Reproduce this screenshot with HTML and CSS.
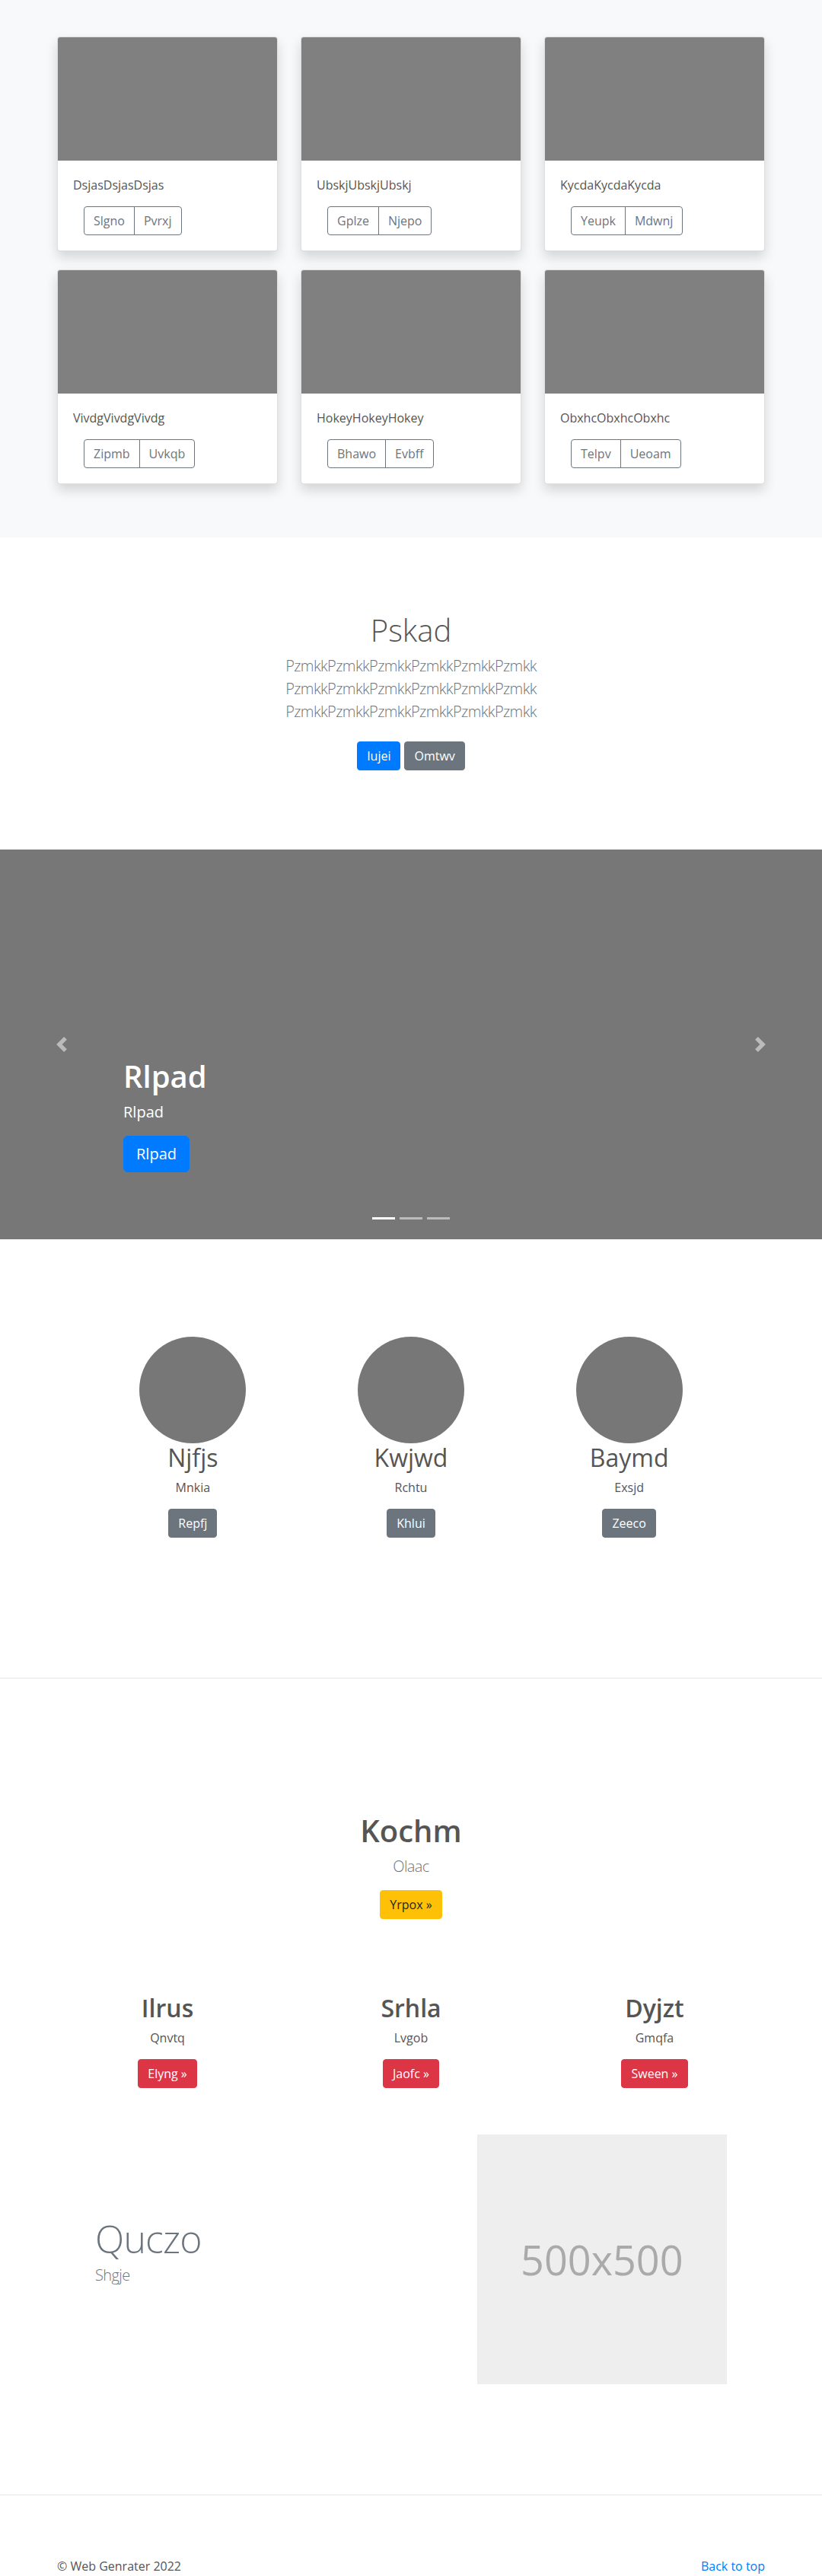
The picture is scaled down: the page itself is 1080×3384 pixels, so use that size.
FILE: index.html
```html
<!DOCTYPE html>
<html lang="en">
<head>
<meta charset="utf-8">
<title>Web Genrater</title>
<link rel="stylesheet" href="styles.css">
</head>
<body>
<main>
  <section class="album">
    <div class="container">
      <div class="card-grid">
        <div class="card">
          <div class="card-img"></div>
          <div class="card-body">
            <p class="card-text">DsjasDsjasDsjas</p>
            <div class="btn-group"><a class="btn btn-outline" href="#">Slgno</a><a class="btn btn-outline" href="#">Pvrxj</a></div>
          </div>
        </div>
        <div class="card">
          <div class="card-img"></div>
          <div class="card-body">
            <p class="card-text">UbskjUbskjUbskj</p>
            <div class="btn-group"><a class="btn btn-outline" href="#">Gplze</a><a class="btn btn-outline" href="#">Njepo</a></div>
          </div>
        </div>
        <div class="card">
          <div class="card-img"></div>
          <div class="card-body">
            <p class="card-text">KycdaKycdaKycda</p>
            <div class="btn-group"><a class="btn btn-outline" href="#">Yeupk</a><a class="btn btn-outline" href="#">Mdwnj</a></div>
          </div>
        </div>
        <div class="card">
          <div class="card-img"></div>
          <div class="card-body">
            <p class="card-text">VivdgVivdgVivdg</p>
            <div class="btn-group"><a class="btn btn-outline" href="#">Zipmb</a><a class="btn btn-outline" href="#">Uvkqb</a></div>
          </div>
        </div>
        <div class="card">
          <div class="card-img"></div>
          <div class="card-body">
            <p class="card-text">HokeyHokeyHokey</p>
            <div class="btn-group"><a class="btn btn-outline" href="#">Bhawo</a><a class="btn btn-outline" href="#">Evbff</a></div>
          </div>
        </div>
        <div class="card">
          <div class="card-img"></div>
          <div class="card-body">
            <p class="card-text">ObxhcObxhcObxhc</p>
            <div class="btn-group"><a class="btn btn-outline" href="#">Telpv</a><a class="btn btn-outline" href="#">Ueoam</a></div>
          </div>
        </div>
      </div>
    </div>
  </section>

  <section class="hero">
    <div class="container">
      <h1>Pskad</h1>
      <p class="lead">PzmkkPzmkkPzmkkPzmkkPzmkkPzmkk PzmkkPzmkkPzmkkPzmkkPzmkkPzmkk PzmkkPzmkkPzmkkPzmkkPzmkkPzmkk</p>
      <div class="hero-actions">
        <a class="btn btn-primary" href="#">Iujei</a>
        <a class="btn btn-secondary" href="#">Omtwv</a>
      </div>
    </div>
  </section>

  <section class="carousel">
    <ol class="carousel-indicators">
      <li class="active"></li>
      <li></li>
      <li></li>
    </ol>
    <div class="carousel-caption">
      <h1>Rlpad</h1>
      <p>Rlpad</p>
      <div class="caption-actions"><a class="btn btn-lg btn-primary" href="#">Rlpad</a></div>
    </div>
    <a class="carousel-control prev" href="#" aria-label="Previous">
      <svg viewBox="0 0 8 8" width="20" height="20"><path fill="#fff" d="M5.25 0l-4 4 4 4 1.5-1.5L4.25 4l2.5-2.5L5.25 0z"/></svg>
    </a>
    <a class="carousel-control next" href="#" aria-label="Next">
      <svg viewBox="0 0 8 8" width="20" height="20"><path fill="#fff" d="M2.75 0l-1.5 1.5L3.75 4l-2.5 2.5L2.75 8l4-4-4-4z"/></svg>
    </a>
  </section>

  <section class="marketing">
    <div class="col">
      <div class="circle"></div>
      <h2>Njfjs</h2>
      <p>Mnkia</p>
      <div class="actions"><a class="btn btn-secondary" href="#">Repfj</a></div>
    </div>
    <div class="col">
      <div class="circle"></div>
      <h2>Kwjwd</h2>
      <p>Rchtu</p>
      <div class="actions"><a class="btn btn-secondary" href="#">Khlui</a></div>
    </div>
    <div class="col">
      <div class="circle"></div>
      <h2>Baymd</h2>
      <p>Exsjd</p>
      <div class="actions"><a class="btn btn-secondary" href="#">Zeeco</a></div>
    </div>
  </section>

  <hr class="divider divider-top">

  <section class="promo">
    <div class="container">
      <h1>Kochm</h1>
      <p class="lead">Olaac</p>
      <div class="actions"><a class="btn btn-warning" href="#">Yrpox &raquo;</a></div>
    </div>
    <div class="container features">
      <div class="col">
        <h2>Ilrus</h2>
        <p>Qnvtq</p>
        <div class="actions"><a class="btn btn-danger" href="#">Elyng &raquo;</a></div>
      </div>
      <div class="col">
        <h2>Srhla</h2>
        <p>Lvgob</p>
        <div class="actions"><a class="btn btn-danger" href="#">Jaofc &raquo;</a></div>
      </div>
      <div class="col">
        <h2>Dyjzt</h2>
        <p>Gmqfa</p>
        <div class="actions"><a class="btn btn-danger" href="#">Sween &raquo;</a></div>
      </div>
    </div>
  </section>

  <section class="featurette">
    <div class="featurette-text">
      <h2>Quczo</h2>
      <p class="lead">Shgje</p>
    </div>
    <div class="featurette-media">
      <div class="placeholder">500x500</div>
    </div>
  </section>

  <hr class="divider divider-bottom">
</main>

<footer class="footer">
  <p>&copy; Web Genrater 2022</p>
  <p><a href="#">Back to top</a></p>
</footer>
</body>
</html>
```

FILE: styles.css
```css
* { box-sizing: border-box; }

body {
  margin: 0;
  font-family: "Open Sans", "Noto Sans", sans-serif;
  font-size: 16px;
  line-height: 1.5;
  color: #555;
  background: #fff;
}

h1, h2, p { margin: 0; }

.container {
  width: 960px;
  margin: 0 auto;
  padding: 0 15px;
}

/* ---------- buttons ---------- */
.btn {
  display: inline-block;
  font-family: inherit;
  font-size: 16px;
  font-weight: 400;
  line-height: 24px;
  padding: 6px 12px;
  border: 1px solid transparent;
  border-radius: 4px;
  text-decoration: none;
  vertical-align: top;
  white-space: nowrap;
}
.btn-outline { color: #6c757d; border-color: #6c757d; background: transparent; }
.btn-primary { background: #007bff; border-color: #007bff; color: #fff; }
.btn-secondary { background: #6c757d; border-color: #6c757d; color: #fff; }
.btn-warning { background: #ffc107; border-color: #ffc107; color: #212529; }
.btn-danger { background: #dc3545; border-color: #dc3545; color: #fff; }
.btn-lg { font-size: 20px; line-height: 30px; padding: 8px 16px; border-radius: 6px; }

.btn-group { display: inline-flex; margin-left: 14px; }
.btn-group .btn:first-child { border-top-right-radius: 0; border-bottom-right-radius: 0; }
.btn-group .btn + .btn { margin-left: -1px; border-top-left-radius: 0; border-bottom-left-radius: 0; }

.actions { display: flex; justify-content: center; }

/* ---------- album ---------- */
.album {
  background: #f8f9fa;
  padding: 48px 0 70px;
}
.card-grid {
  display: grid;
  grid-template-columns: repeat(3, 1fr);
  gap: 24px 30px;
}
.card {
  background: #fff;
  border: 1px solid rgba(0, 0, 0, .125);
  border-radius: 4px;
  box-shadow: 0 8px 16px rgba(0, 0, 0, .15);
  overflow: hidden;
}
.card-img { aspect-ratio: 16 / 9; background: #808080; }
.card-body { padding: 20px; }
.card-text { margin-bottom: 16px; }

/* ---------- hero ---------- */
.hero {
  text-align: center;
  padding: 98px 0 96px;
}
.hero h1 {
  font-size: 40px;
  font-weight: 300;
  line-height: 48px;
  margin-bottom: 8px;
  color: #555;
}
.lead {
  font-size: 20px;
  font-weight: 300;
  line-height: 30px;
  letter-spacing: -0.03em;
}
.hero .lead {
  color: #6c757d;
  max-width: 500px;
  margin: 0 auto 16px;
}
.hero-actions {
  display: flex;
  justify-content: center;
  gap: 5px;
  padding: 8px 0;
}

/* ---------- carousel ---------- */
.carousel {
  position: relative;
  height: 512px;
  background: #777;
  overflow: hidden;
}
.carousel-control {
  position: absolute;
  top: 0;
  bottom: 0;
  width: 15%;
  display: flex;
  align-items: center;
  justify-content: center;
  opacity: .5;
}
.carousel-control.prev { left: 0; }
.carousel-control.next { right: 0; }
.carousel-control svg { display: block; width: 20px; height: 20px; }
.carousel-indicators {
  position: absolute;
  left: 0;
  right: 0;
  bottom: 16px;
  display: flex;
  justify-content: center;
  list-style: none;
  margin: 0;
  padding: 0;
}
.carousel-indicators li {
  width: 30px;
  height: 3px;
  margin: 10px 3px;
  background: #fff;
  opacity: .5;
}
.carousel-indicators li.active { opacity: 1; }
.carousel-caption {
  position: absolute;
  left: 15%;
  right: 15%;
  bottom: 52px;
  padding: 20px 0;
  color: #fff;
  z-index: 2;
}
.carousel-caption h1 {
  font-size: 40px;
  font-weight: 600;
  line-height: 48px;
  margin-bottom: 8px;
}
.carousel-caption p {
  font-size: 20px;
  line-height: 30px;
  margin-bottom: 16px;
}
.caption-actions { margin-bottom: 16px; }

/* ---------- marketing ---------- */
.marketing {
  width: 860px;
  margin: 0 auto;
  padding-top: 128px;
  display: grid;
  grid-template-columns: repeat(3, 1fr);
  text-align: center;
}
.marketing .col { padding: 0 15px; }
.circle {
  width: 140px;
  height: 140px;
  border-radius: 50%;
  background: #777;
  margin: 0 auto;
}
.marketing h2 {
  font-size: 32px;
  font-weight: 400;
  line-height: 38px;
  margin-bottom: 8px;
}
.marketing p { margin-bottom: 16px; }

.divider {
  border: 0;
  border-top: 1px solid rgba(0, 0, 0, .1);
  margin: 0;
}
.divider-top { margin-top: 184px; }
.divider-bottom { margin-top: 145px; }

/* ---------- promo ---------- */
.promo { text-align: center; padding-top: 176px; }
.promo h1 {
  font-size: 40px;
  font-weight: 600;
  line-height: 48px;
  margin-bottom: 8px;
}
.promo .lead { color: #6c757d; margin-bottom: 16px; }
.features {
  display: grid;
  grid-template-columns: repeat(3, 1fr);
  column-gap: 30px;
  margin-top: 98px;
}
.features h2 {
  font-size: 32px;
  font-weight: 600;
  line-height: 38px;
  margin-bottom: 8px;
}
.features p { margin-bottom: 16px; }

/* ---------- featurette ---------- */
.featurette {
  width: 860px;
  margin: 61px auto 0;
  display: grid;
  grid-template-columns: 7fr 5fr;
  align-items: center;
}
.featurette-text, .featurette-media { padding: 0 15px; }
.featurette h2 {
  font-size: 50px;
  font-weight: 300;
  line-height: 1;
  letter-spacing: -.8px;
  color: #6c757d;
  margin-bottom: 8px;
}
.featurette .lead { color: #6c757d; margin-bottom: 16px; }
.placeholder {
  aspect-ratio: 1 / 1;
  background: #eee;
  color: #aaa;
  font-size: 54px;
  display: flex;
  align-items: center;
  justify-content: center;
}

/* ---------- footer ---------- */
.footer {
  width: 960px;
  margin: 0 auto;
  padding: 81px 15px 0;
  display: flex;
  justify-content: space-between;
}
.footer p { margin-bottom: 16px; }
.footer a { color: #007bff; text-decoration: none; }
```
